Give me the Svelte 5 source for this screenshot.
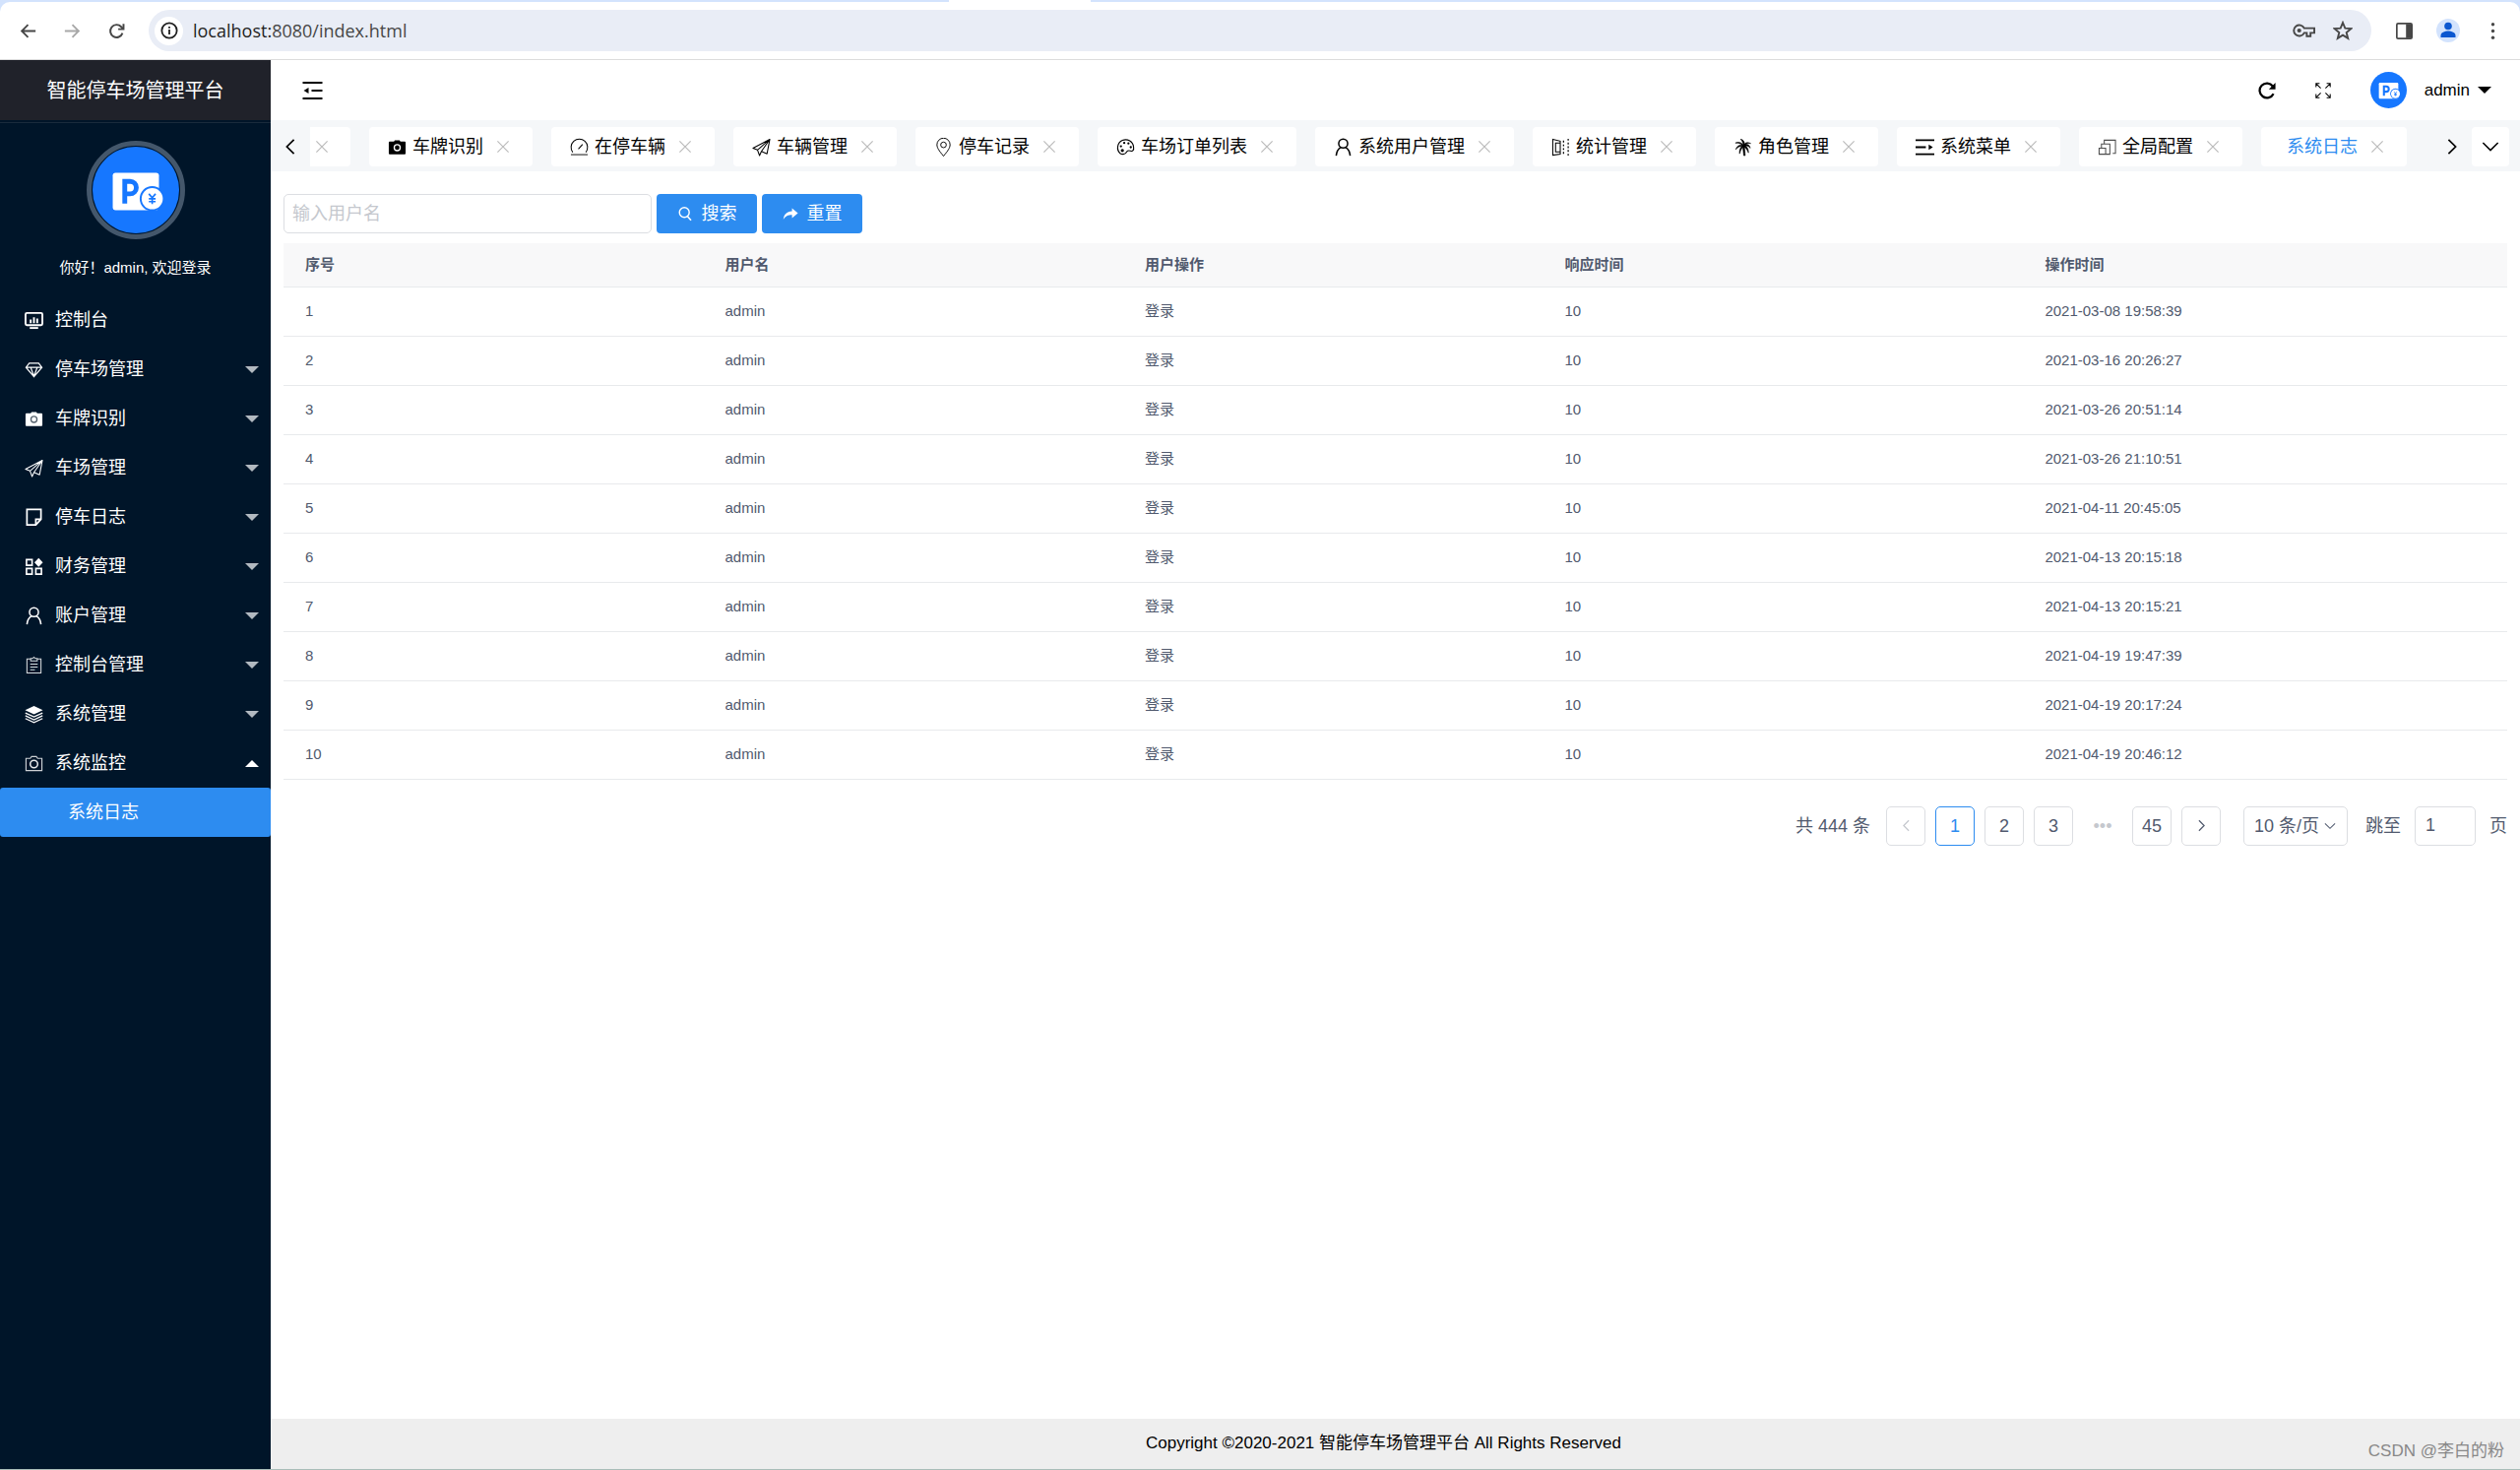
<script lang="ts">
  type Tab = { label: string; icon: string; active?: boolean };
  type MenuItem = { label: string; icon: string; open?: boolean; leaf?: boolean };

  const menu: MenuItem[] = [
    { label: '控制台', icon: 'monitor', leaf: true },
    { label: '停车场管理', icon: 'gem' },
    { label: '车牌识别', icon: 'camera' },
    { label: '车场管理', icon: 'plane' },
    { label: '停车日志', icon: 'note' },
    { label: '财务管理', icon: 'widgets' },
    { label: '账户管理', icon: 'user' },
    { label: '控制台管理', icon: 'clipboard' },
    { label: '系统管理', icon: 'layers' },
    { label: '系统监控', icon: 'cameraLine', open: true },
  ];

  const tabs: Tab[] = [
    { label: '车牌识别', icon: 'camera' },
    { label: '在停车辆', icon: 'gauge' },
    { label: '车辆管理', icon: 'plane' },
    { label: '停车记录', icon: 'pin' },
    { label: '车场订单列表', icon: 'palette' },
    { label: '系统用户管理', icon: 'user' },
    { label: '统计管理', icon: 'mirror' },
    { label: '角色管理', icon: 'palm' },
    { label: '系统菜单', icon: 'indent' },
    { label: '全局配置', icon: 'shapes' },
    { label: '系统日志', icon: '', active: true },
  ];

  const columns = ['序号', '用户名', '用户操作', '响应时间', '操作时间'];
  const times = [
    '2021-03-08 19:58:39',
    '2021-03-16 20:26:27',
    '2021-03-26 20:51:14',
    '2021-03-26 21:10:51',
    '2021-04-11 20:45:05',
    '2021-04-13 20:15:18',
    '2021-04-13 20:15:21',
    '2021-04-19 19:47:39',
    '2021-04-19 20:17:24',
    '2021-04-19 20:46:12',
  ];

  let username = $state('');
  let jump = $state('1');
</script>

{#snippet icon(name: string)}
  <svg class="icon" viewBox="0 0 20 20" fill="none" stroke="currentColor" stroke-width="1.4" aria-hidden="true">
    {#if name === 'monitor'}
      <rect x="1" y="2" width="18" height="13" rx="1.5" stroke-width="2" />
      <path d="M6.500 9v4M10 6.500v6.500M13.500 8v5" stroke-width="2" />
      <path d="M5.500 18h9" stroke-width="2" />
    {:else if name === 'gem'}
      <path d="M5 3h10l3.500 4.500L10 17.500 1.500 7.500zM1.500 7.500h17M6.500 7.500L10 17l3.500-9.500" stroke-width="1.300" />
    {:else if name === 'camera'}
      <path d="M2 4h4.500l1-1.500h5l1 1.500H18a1 1 0 0 1 1 1v11.500a1 1 0 0 1-1 1H2a1 1 0 0 1-1-1V5a1 1 0 0 1 1-1z" fill="currentColor" stroke="none" />
      <circle class="lens" cx="10" cy="10.500" r="3.200" />
    {:else if name === 'plane'}
      <path d="M19 1.500L1 11l4.800 2 2.200 6 2-4.500 6 2.500zM19 1.500L5.800 13M19 1.500L10 14.500" stroke-width="1.100" stroke-linejoin="round" />
    {:else if name === 'note'}
      <path d="M2.500 1.500h15v10.500l-5.500 6H2.500zM17 12h-5v5.500" stroke-width="1.800" />
    {:else if name === 'widgets'}
      <path d="M2 2.500h6v6H2zM2 12h6v6H2zM12 12h6v6h-6z" stroke-width="1.700" />
      <path d="M15 .8l4.500 4.700-4.500 4.700-4.500-4.700z" fill="currentColor" stroke="none" />
    {:else if name === 'user'}
      <circle cx="10" cy="6" r="4.800" stroke-width="1.600" />
      <path d="M2.500 19c.5-4.500 2-7 5-8.800M17.500 19c-.5-4.500-2-7-5-8.800" stroke-width="1.600" />
    {:else if name === 'clipboard'}
      <path d="M6.500 3.500h-4v15h15v-15h-4M6.500 5.500v-2.500h2l1.500-1.500 1.500 1.500h2v2.500zM6 9h8M6 12h8M6 15h5" stroke-width="1.100" stroke-opacity=".85" />
    {:else if name === 'layers'}
      <path d="M10 1l9.500 4.500L10 10 .5 5.500z" fill="currentColor" stroke="none" />
      <path d="M.8 8.500L10 12.800l9.200-4.300M.8 11.500L10 15.800l9.200-4.300M.8 14.500L10 18.800l9.200-4.300" stroke-width="1.300" />
    {:else if name === 'cameraLine'}
      <path d="M1.500 4.500h4.500L7.500 2.500h5L14 4.500h4.500v13h-17z" stroke-width="1.200" stroke-opacity=".8" />
      <circle cx="10" cy="10.500" r="4" stroke-width="1.600" stroke-opacity=".9" />
    {:else if name === 'gauge'}
      <path d="M3 15.500a8.800 8.800 0 1 1 14 0M9 12l4.500-5" stroke-width="1.100" />
      <path d="M1 18h18" stroke-width="2" stroke-opacity=".5" />
    {:else if name === 'pin'}
      <path d="M10 19.500C5 13.500 3 10.500 3 7.300a7 7 0 0 1 14 0c0 3.200-2 6.200-7 12.200z" stroke-width="1" />
      <circle cx="10" cy="7.500" r="3" stroke-width="1" />
    {:else if name === 'palette'}
      <path d="M4 16.500A8.500 8.500 0 1 1 18.500 10c.5 3-1 4.500-2.500 4.200-2-.5-3.500-1.200-4.500.3-1 2-2 3-4 3a6 6 0 0 1-3.500-1z" stroke-width="1.200" />
      <circle cx="5" cy="9" r="1.200" fill="currentColor" stroke="none" /><circle cx="8.500" cy="5.500" r="1.200" fill="currentColor" stroke="none" />
      <circle cx="13" cy="6" r="1.200" fill="currentColor" stroke="none" /><circle cx="15.500" cy="10" r="1.200" fill="currentColor" stroke="none" />
      <circle cx="6.500" cy="13.500" r="1.700" fill="currentColor" stroke="none" />
    {:else if name === 'mirror'}
      <path d="M1.500 1.500l8 2v14l-8 1zM4.500 5.500h5v9.500h-5z" stroke-width="1.100" />
      <path d="M13 3v15M18 1v18" stroke-width="1.300" stroke-dasharray="2 2" />
    {:else if name === 'palm'}
      <path d="M10.500 7.500C8 4.500 5 4 2 5.500c3-.2 5.500.3 7 2C5.500 7.500 3 9.500 2.500 12.500c2-2.500 4-3.500 6.500-3.500C7 11 6 14 6.500 17c1-3.500 2-5.500 3.500-7 .2 3 .8 6 1 9h1.500c0-3-.5-6-.8-9 1.800 1.300 3.300 3.200 4.300 6 .2-3.500-1-5.500-3-7.500 2 0 3.500.8 5 2.500-.5-3-2.500-4.300-5-4 1.200-1 2.700-1.300 5.500-1-3-1.500-5-1.200-6.500.5C11.500 3.500 10 1.500 7.500 1.500c1.700 1.200 2.700 3.500 3 6z" fill="currentColor" stroke="currentColor" stroke-width=".6" />
    {:else if name === 'indent'}
      <path d="M0 2.500h20M0 17.500h20M0 10h11" stroke-width="2" />
      <path d="M14 7l4.500 3-4.500 3z" fill="currentColor" stroke="none" />
    {:else if name === 'outdent'}
      <path d="M0 2h20M0 18h20M9 10h11" stroke-width="2.200" />
      <path d="M6 7l-5 3 5 3z" fill="currentColor" stroke="none" />
    {:else if name === 'shapes'}
      <path d="M7 6V2.500h12v14h-3M1.500 11h7v6.500h-7zM4 11V6.500h9v11H8.500" stroke-width="1.100" stroke-opacity=".7" />
    {:else if name === 'close'}
      <path d="M3 3l14 14M17 3L3 17" stroke-width="1.500" />
    {:else if name === 'left'}
      <path d="M14 2l-8 8 8 8" stroke-width="1.900" />
    {:else if name === 'right'}
      <path d="M6 2l8 8-8 8" stroke-width="1.900" />
    {:else if name === 'down'}
      <path d="M1.500 5.500L10 14l8.500-8.500" stroke-width="1.700" />
    {:else if name === 'search'}
      <circle cx="9" cy="8.500" r="6.200" stroke-width="1.800" /><path d="M13 13.500l4.500 5" stroke-width="2" />
    {:else if name === 'share'}
      <path d="M12 3l7.500 6.500-7.500 6v-4C7 11.500 3.500 13 1 17.500 1.500 11 5.500 7 12 6.800z" fill="currentColor" stroke="none" />
    {:else if name === 'refresh'}
      <path d="M17.300 13.500a8.200 8.200 0 1 1-.8-8.500" stroke-width="2.500" />
      <path d="M19.500 1v7.500h-7.500z" fill="currentColor" stroke="none" />
    {:else if name === 'expand'}
      <path d="M1 5.500V1h4.500M1 1l6 6M14.500 1H19v4.500M19 1l-6 6M1 14.500V19h4.500M1 19l6-6M19 14.500V19h-4.500M19 19l-6-6" stroke-width="1.300" />
    {:else if name === 'back'}
      <path d="M19 10H3M10 2.500L2.500 10l7.500 7.500" stroke-width="2.200" />
    {:else if name === 'forward'}
      <path d="M1 10h16M10 2.500l7.500 7.500-7.500 7.500" stroke-width="2.200" />
    {:else if name === 'reload'}
      <path d="M17 12.500a7.500 7.500 0 1 1-1.500-7.500l2 2" stroke-width="2.300" /><path d="M18.200 1.500v6.300h-6.300" stroke-width="2.300" />
    {:else if name === 'info'}
      <circle cx="10" cy="10" r="8.500" stroke-width="2" /><path d="M10 9v5.500M10 5.500v2" stroke-width="2" />
    {:else if name === 'star'}
      <path d="M10 2l2.300 5.600 6 .5-4.600 3.900 1.500 5.900L10 14.700l-5.200 3.200 1.500-5.900L1.700 8.100l6-.5z" stroke-width="1.900" />
    {:else if name === 'panel'}
      <rect x="1" y="1" width="18" height="18" rx="1.500" stroke-width="2" /><path d="M12 1.500h7v17h-7z" fill="currentColor" stroke="none" />
    {:else if name === 'dots'}
      <g fill="currentColor" stroke="none"><circle cx="10" cy="2" r="2" /><circle cx="10" cy="10" r="2" /><circle cx="10" cy="18" r="2" /></g>
    {/if}
  </svg>
{/snippet}

{#snippet logo()}
  <svg class="logo" viewBox="0 0 90 90" aria-hidden="true">
    <circle cx="45" cy="45" r="45" fill="#1677ff" />
    <rect x="21" y="27" width="48" height="39" rx="3" fill="#fff" />
    <path d="M33.500 59V36H39a6.500 6.500 0 0 1 0 13h-5" fill="none" stroke="#1677ff" stroke-width="5" />
    <circle cx="62" cy="54" r="13" fill="#1677ff" />
    <circle cx="62" cy="54" r="11" fill="#fff" />
    <path d="M58.500 49L62 53l3.500-4M62 53v6.500M58.500 54h7M58.500 57h7" fill="none" stroke="#1677ff" stroke-width="1.700" />
  </svg>
{/snippet}

<div class="window">
  <div class="browser">
    <div class="strip"><span class="strip-tab"></span></div>
    <div class="toolbar">
      <button class="nav" aria-label="后退">{@render icon('back')}</button>
      <button class="nav dim" aria-label="前进">{@render icon('forward')}</button>
      <button class="nav" aria-label="重新加载">{@render icon('reload')}</button>
      <div class="omnibox">
        <button class="site" aria-label="网站信息">{@render icon('info')}</button>
        <span class="url"><b>localhost:</b>8080/index.html</span>
        <button class="nav" aria-label="密码">
          <svg class="key" viewBox="0 0 24 16" fill="none" stroke="currentColor" stroke-width="2" aria-hidden="true">
            <path d="M12.300 5.500a5.800 5.800 0 1 0 0 5H15V14h4v-3.500h4v-5z" /><circle cx="7" cy="8" r="2.200" fill="currentColor" stroke="none" />
          </svg>
        </button>
        <button class="nav" aria-label="收藏">{@render icon('star')}</button>
      </div>
      <button class="nav" aria-label="侧边栏">{@render icon('panel')}</button>
      <button class="nav" aria-label="用户">
        <svg class="profile" viewBox="0 0 24 24" aria-hidden="true">
          <circle cx="12" cy="12" r="12" fill="#d3e3fd" /><circle cx="12" cy="7.500" r="3.800" fill="#0b57d0" />
          <path d="M4.500 19v-2c0-3 4-4.500 7.500-4.500s7.500 1.500 7.500 4.500v2z" fill="#0b57d0" />
        </svg>
      </button>
      <button class="nav" aria-label="菜单">{@render icon('dots')}</button>
    </div>
  </div>

  <div class="app">
    <aside>
      <h1>智能停车场管理平台</h1>
      <div class="welcome">
        <span class="ring">{@render logo()}</span>
        <p>你好！admin, 欢迎登录</p>
      </div>
      <nav>
        {#each menu as item}
          <a href="#menu" class:open={item.open}>
            {@render icon(item.icon)}
            <span>{item.label}</span>
            {#if !item.leaf}<i class="caret"></i>{/if}
          </a>
        {/each}
        <a href="#log" class="current">系统日志</a>
      </nav>
    </aside>

    <div class="content">
      <header>
        <button class="fold" aria-label="折叠菜单">{@render icon('outdent')}</button>
        <button class="tool" aria-label="刷新">{@render icon('refresh')}</button>
        <button class="tool full" aria-label="全屏">{@render icon('expand')}</button>
        <button class="account">{@render logo()}<span>admin</span><i class="caret"></i></button>
      </header>

      <div class="tabbar">
        <button class="arrow" aria-label="向左">{@render icon('left')}</button>
        <div class="tabs">
          <div class="tab cut"><button aria-label="关闭">{@render icon('close')}</button></div>
          {#each tabs as tab}
            <div class="tab" class:active={tab.active}>
              {#if tab.icon}{@render icon(tab.icon)}{/if}
              <a href="#tab">{tab.label}</a>
              <button aria-label="关闭{tab.label}">{@render icon('close')}</button>
            </div>
          {/each}
        </div>
        <button class="arrow" aria-label="向右">{@render icon('right')}</button>
        <button class="more" aria-label="更多">{@render icon('down')}</button>
      </div>

      <main>
        <form class="filter" onsubmit={(e) => e.preventDefault()}>
          <input type="text" aria-label="用户名" placeholder="输入用户名" bind:value={username} />
          <button type="submit">{@render icon('search')}搜索</button>
          <button type="reset">{@render icon('share')}重置</button>
        </form>

        <table>
          <colgroup><col class="c" /><col class="c" /><col class="c" /><col class="w" /><col /></colgroup>
          <thead>
            <tr>{#each columns as c}<th scope="col">{c}</th>{/each}</tr>
          </thead>
          <tbody>
            {#each times as t, i}
              <tr><td>{i + 1}</td><td>admin</td><td>登录</td><td>10</td><td>{t}</td></tr>
            {/each}
          </tbody>
        </table>

        <div class="pager">
          <span class="total">共 444 条</span>
          <button class="page off" aria-label="上一页">{@render icon('left')}</button>
          <button class="page on">1</button>
          <button class="page">2</button>
          <button class="page">3</button>
          <span class="gap">•••</span>
          <button class="page">45</button>
          <button class="page" aria-label="下一页">{@render icon('right')}</button>
          <span class="size">
            <select aria-label="每页条数"><option>10 条/页</option></select>
            {@render icon('down')}
          </span>
          <label class="jump">跳至<input type="text" bind:value={jump} />页</label>
        </div>
      </main>

      <footer>
        <span>Copyright ©2020-2021 智能停车场管理平台 All Rights Reserved</span>
        <small>CSDN @李白的粉</small>
      </footer>
    </div>
  </div>
</div>

<style>
  :global(body) {
    margin: 0;
    background: #fff;
  }
  .window {
    display: flex;
    flex-direction: column;
    min-height: 100vh;
    box-sizing: border-box;
    border-bottom: 1px solid #a9bdb8;
    font: 18px/24px 'Liberation Sans', 'Noto Sans CJK SC', sans-serif;
    color: #000;
  }
  .window :global(*) {
    box-sizing: border-box;
  }
  button,
  input,
  select {
    font: inherit;
    color: inherit;
    margin: 0;
  }
  button {
    display: flex;
    align-items: center;
    justify-content: center;
    padding: 0;
    border: 0;
    background: none;
    cursor: pointer;
  }
  a {
    color: inherit;
    text-decoration: none;
  }
  .icon {
    display: block;
    flex: none;
    width: 18px;
    height: 18px;
  }
  .caret {
    flex: none;
    border: 7px solid transparent;
    border-top-color: currentColor;
    border-bottom: 0;
  }

  .browser {
    background: #d3e3fd;
  }
  .strip {
    height: 2px;
    padding-left: 964px;
  }
  .strip-tab {
    display: block;
    width: 144px;
    height: 2px;
    background: #fff;
  }
  .toolbar {
    display: flex;
    align-items: center;
    height: 59px;
    padding: 0 12px;
    border-bottom: 1px solid #dcdcdc;
    border-radius: 10px 10px 0 0;
    background: #fff;
    color: #474747;
  }
  .nav {
    flex: none;
    width: 32px;
    height: 32px;
    margin-right: 13px;
  }
  .nav .icon {
    width: 17px;
    height: 17px;
  }
  .nav:last-child {
    margin-right: 0;
  }
  .dim {
    color: #a8a8a8;
  }
  .omnibox {
    display: flex;
    flex: 1;
    align-items: center;
    height: 42px;
    margin: 0 17px 0 4px;
    padding-left: 6px;
    border-radius: 21px;
    background: #e9edf6;
  }
  .omnibox .nav {
    margin-right: 8px;
  }
  .omnibox .nav:last-child {
    margin-right: 13px;
  }
  .omnibox .nav:last-child .icon {
    width: 20px;
    height: 20px;
  }
  .site {
    width: 29px;
    height: 29px;
    border-radius: 50%;
    background: #fff;
    color: #1f1f1f;
  }
  .key {
    width: 23px;
    height: 16px;
  }
  .profile {
    width: 24px;
    height: 24px;
  }
  .url {
    flex: 1;
    margin-left: 10px;
    font-family: 'Open Sans', sans-serif;
    color: #474747;
  }
  .url b {
    font-weight: 400;
    color: #1f1f1f;
  }

  .app {
    display: flex;
    flex: 1;
  }
  aside {
    flex: none;
    width: 275px;
    background: #001529;
    color: #fff;
  }
  h1 {
    height: 61px;
    margin: 0;
    background: #20222a;
    font-size: 20px;
    font-weight: 400;
    line-height: 62px;
    text-align: center;
  }
  .welcome {
    display: flex;
    flex-direction: column;
    align-items: center;
    gap: 17px;
    height: 176px;
    margin-top: 2px;
    padding-top: 18px;
    border-top: 1px solid #1a2b3c;
  }
  .ring {
    width: 100px;
    height: 100px;
    padding: 1px;
    border: 5px solid #44576b;
    border-radius: 50%;
  }
  .welcome p {
    margin: 0;
    font-size: 15px;
  }
  .logo {
    display: block;
    width: 100%;
    height: auto;
  }
  nav a {
    display: flex;
    align-items: center;
    gap: 12px;
    height: 50px;
    padding: 0 12px 0 25px;
  }
  nav a span {
    flex: 1;
  }
  nav .icon {
    width: 19px;
    height: 19px;
  }
  nav .caret {
    color: #b2b9c0;
  }
  nav .open .caret {
    color: #fff;
    transform: rotate(180deg);
  }
  nav .current {
    padding-left: 69px;
    border-radius: 3px;
    background: #2d8cf0;
  }
  .lens {
    stroke: #fff;
  }
  nav .lens {
    stroke: #54606c;
  }

  .content {
    display: flex;
    flex: 1;
    flex-direction: column;
    min-width: 0;
  }
  header {
    display: flex;
    align-items: center;
    height: 61px;
    padding: 0 29px 0 32px;
  }
  .fold {
    margin-right: auto;
  }
  .fold .icon {
    width: 21px;
    height: 20px;
  }
  .tool {
    margin-right: 40px;
  }
  .full .icon {
    width: 16px;
    height: 16px;
  }
  .account .logo {
    width: 37px;
  }
  .account {
    font-size: 17px;
  }
  .account span {
    margin: 0 8px 0 18px;
  }

  .tabbar {
    display: flex;
    align-items: center;
    height: 52px;
    padding: 2px 11px 0 0;
    background: #f5f7f9;
  }
  .arrow {
    flex: none;
    width: 40px;
    height: 40px;
  }
  .tabs {
    display: flex;
    flex: 1;
    gap: 19px;
    overflow: hidden;
  }
  .tab {
    display: flex;
    flex: none;
    align-items: center;
    gap: 6px;
    height: 40px;
    padding: 0 22px 0 19px;
    border-radius: 4px;
    background: #fff;
  }
  .tab > .icon {
    width: 19px;
    height: 19px;
  }
  .tab button {
    margin-left: 6px;
    color: #bbb;
  }
  .tab button .icon {
    width: 16px;
    height: 16px;
  }
  .tab.cut {
    width: 41px;
    padding: 0;
    border-radius: 0 4px 4px 0;
  }
  .tab.cut button {
    margin-left: 4px;
  }
  .tab.active {
    padding-left: 26px;
    color: #2d8cf0;
  }
  .more {
    width: 38px;
    height: 40px;
    border-radius: 4px;
    background: #fff;
  }

  main {
    flex: 1;
    padding: 23px 13px 0;
    color: #515a6e;
  }
  .filter {
    display: flex;
    gap: 5px;
    margin-bottom: 10px;
  }
  .filter input {
    width: 374px;
    height: 40px;
    padding: 0 8px;
    border: 1px solid #dcdee2;
    border-radius: 5px;
    background: #fff;
  }
  .filter input::placeholder {
    color: #c5c8ce;
  }
  .filter button {
    gap: 9px;
    width: 102px;
    height: 40px;
    border-radius: 4px;
    background: #2d8cf0;
    color: #fff;
  }
  .filter .icon {
    width: 16px;
    height: 16px;
  }

  table {
    width: 100%;
    border-collapse: collapse;
    table-layout: fixed;
    border-bottom: 1px solid #dcdee2;
    font-size: 15px;
  }
  .c {
    width: 18.88%;
  }
  .w {
    width: 21.6%;
  }
  th,
  td {
    height: 50px;
    padding: 0 22px;
    border-bottom: 1px solid #e8eaec;
    text-align: left;
  }
  th {
    height: 44px;
    background: #f8f8f9;
    font-weight: 700;
  }

  .pager {
    display: flex;
    align-items: center;
    gap: 10px;
    justify-content: flex-end;
    margin-top: 27px;
  }
  .total {
    margin-right: 6px;
  }
  .page {
    width: 40px;
    height: 40px;
    border: 1px solid #dcdee2;
    border-radius: 5px;
  }
  .page .icon {
    width: 13px;
    height: 13px;
  }
  .page.on {
    border-color: #2d8cf0;
    color: #2d8cf0;
  }
  .page.off {
    color: #c5c8ce;
  }
  .gap {
    width: 40px;
    color: #c5c8ce;
    text-align: center;
  }
  .size {
    display: grid;
    align-items: center;
    margin-left: 13px;
  }
  .size select,
  .size .icon {
    grid-area: 1 / 1;
  }
  .size select {
    width: 106px;
    height: 40px;
    padding: 0 10px;
    border: 1px solid #dcdee2;
    border-radius: 5px;
    background: none;
    appearance: none;
  }
  .size .icon {
    justify-self: end;
    width: 12px;
    height: 12px;
    margin-right: 12px;
    pointer-events: none;
  }
  .jump {
    display: flex;
    align-items: center;
    gap: 14px;
    margin-left: 8px;
  }
  .jump input {
    width: 62px;
    height: 40px;
    padding: 0 10px;
    border: 1px solid #dcdee2;
    border-radius: 5px;
  }

  footer {
    position: relative;
    display: flex;
    align-items: center;
    justify-content: center;
    height: 51px;
    padding: 0 24px 2px 0;
    background: #eee;
    font-size: 17px;
  }
  footer small {
    position: absolute;
    right: 16px;
    bottom: 6px;
    font-size: 17px;
    color: #888;
  }
</style>
